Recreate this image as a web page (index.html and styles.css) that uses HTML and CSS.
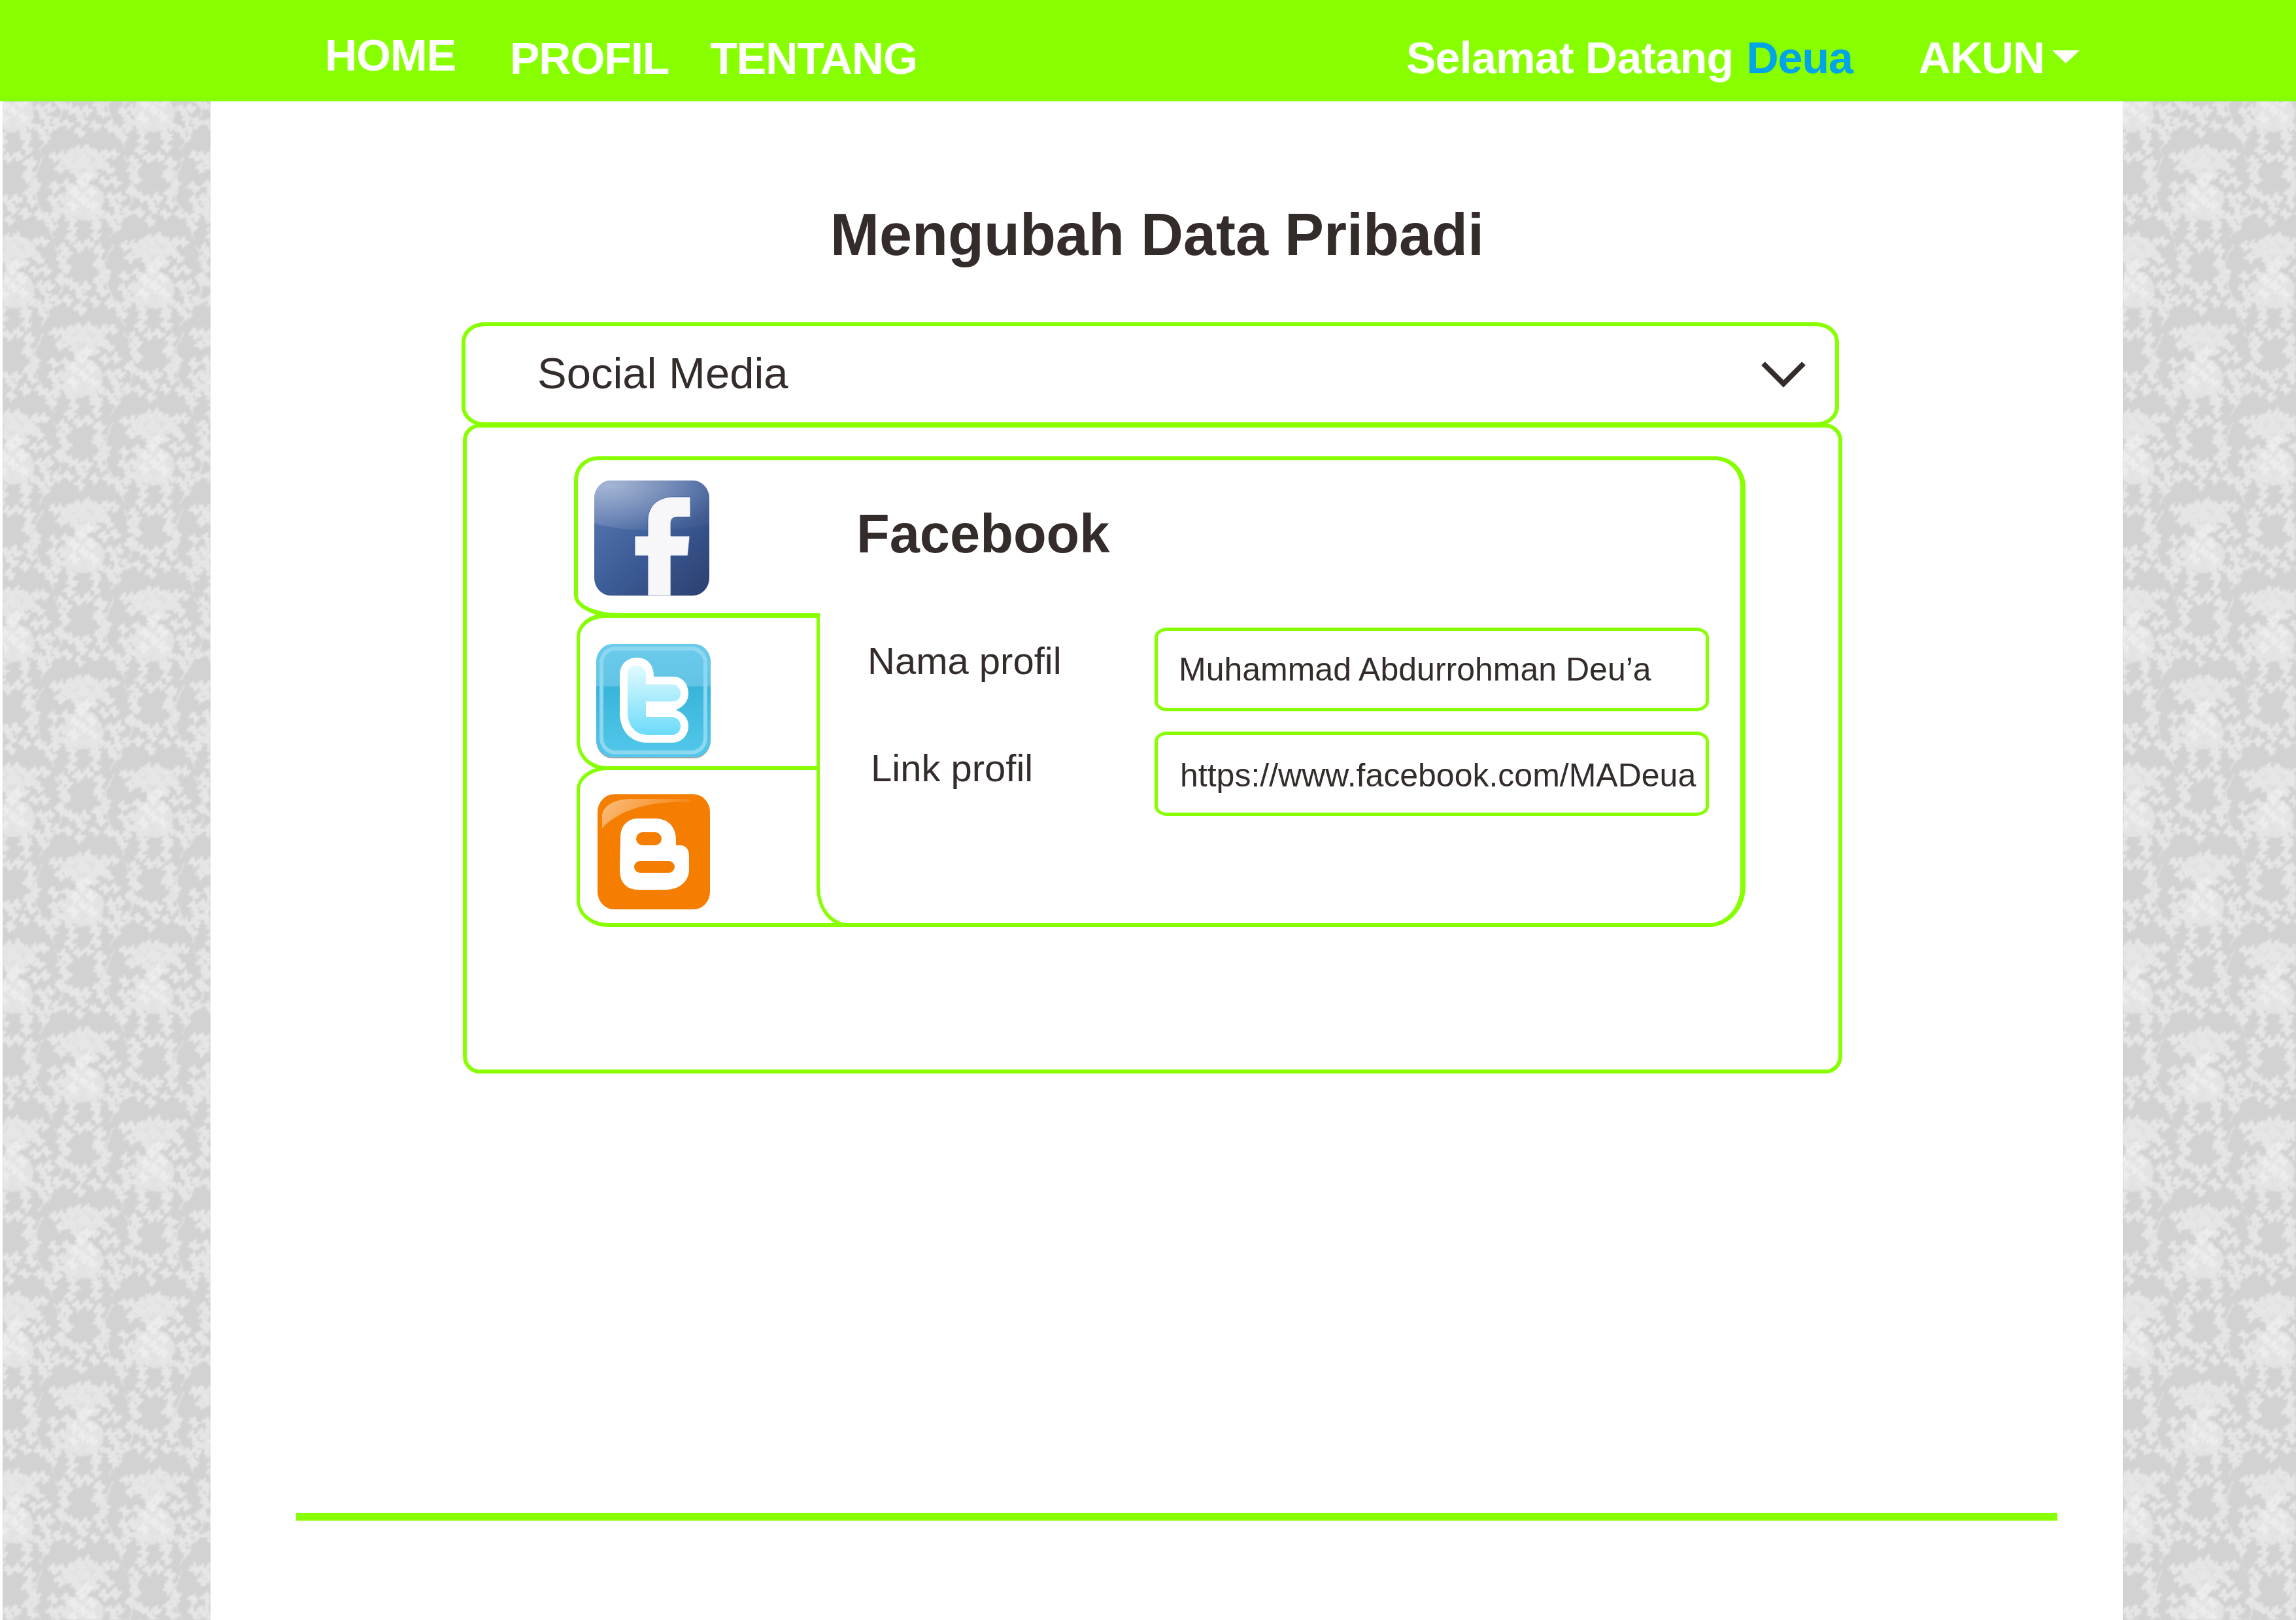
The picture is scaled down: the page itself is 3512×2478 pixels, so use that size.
FILE: index.html
```html
<!DOCTYPE html>
<html lang="id">
<head>
<meta charset="utf-8">
<title>Mengubah Data Pribadi</title>
<link rel="stylesheet" href="styles.css">
</head>
<body>
<header class="topbar">
  <nav class="nav-left">
    <a class="nav-item nav-home">HOME</a>
    <a class="nav-item nav-profil">PROFIL</a>
    <a class="nav-item nav-tentang">TENTANG</a>
  </nav>
  <div class="nav-right">
    <span class="welcome">Selamat Datang <span class="welcome-name">Deua</span></span>
    <span class="account">AKUN<svg class="account-caret" viewBox="0 0 42 20"><polygon points="0,0 42,0 21,20"/></svg></span>
  </div>
</header>
<div class="shell">
  <aside class="side side-left">
    <svg class="floral" width="100%" height="100%">
      <defs>
        <filter id="organic" x="0" y="0" width="100%" height="100%">
          <feTurbulence type="fractalNoise" baseFrequency="0.035" numOctaves="1" seed="7" result="warp"/>
          <feDisplacementMap in="SourceGraphic" in2="warp" scale="9" xChannelSelector="R" yChannelSelector="G" result="a"/>
          <feTurbulence type="fractalNoise" baseFrequency="0.18" numOctaves="2" seed="4" result="n"/>
          <feDisplacementMap in="a" in2="n" scale="5" xChannelSelector="G" yChannelSelector="R"/>
          <feGaussianBlur stdDeviation="1.05"/>
        </filter>
        <g id="p">
          <circle r="3.4"/>
          <ellipse cy="-5.6" rx="2.3" ry="4"/>
          <ellipse cy="5.6" rx="2.3" ry="4"/>
          <ellipse cx="-5.6" rx="4" ry="2.3"/>
          <ellipse cx="5.6" rx="4" ry="2.3"/>
          <ellipse cx="-4.2" cy="-4.2" rx="2.4" ry="2.4"/>
          <ellipse cx="4.2" cy="4.2" rx="2.4" ry="2.4"/>
        </g>
        <g id="q">
          <use href="#p" x="-7" y="-5"/>
          <use href="#p" x="7" y="-7"/>
          <use href="#p" x="1" y="8"/>
        </g>
        <g id="motif">
          <g fill="#e6e6e6">
            <ellipse cx="0" cy="-56" rx="34" ry="16" fill="#e0e0e0"/>
            <ellipse cx="0" cy="6" rx="31" ry="29" fill="#e3e3e3"/>
            <use href="#q" x="0" y="-66"/><use href="#q" x="-26" y="-58"/><use href="#q" x="27" y="-60"/>
            <use href="#q" x="-12" y="-46"/><use href="#q" x="15" y="-44"/><use href="#p" x="-45" y="-62"/><use href="#p" x="46" y="-67"/>
            <use href="#p" x="-36" y="-44"/><use href="#p" x="38" y="-42"/><use href="#p" x="-2" y="-30"/>
            <use href="#q" x="-40" y="9"/><use href="#q" x="48" y="6"/><use href="#q" x="-50" y="36"/><use href="#q" x="46" y="36"/>
            <use href="#p" x="-26" y="-18"/><use href="#p" x="32" y="-22"/><use href="#p" x="-46" y="-16"/><use href="#p" x="48" y="-24"/>
            <use href="#q" x="-20" y="28"/><use href="#q" x="18" y="30"/>
            <use href="#p" x="-17" y="48"/><use href="#p" x="-21" y="62"/><use href="#p" x="-8" y="75"/><use href="#p" x="7" y="72"/><use href="#p" x="19" y="59"/><use href="#p" x="18" y="45"/>
            <use href="#p" x="-31" y="78"/><use href="#p" x="-33" y="94"/><use href="#p" x="-27" y="108"/><use href="#p" x="-36" y="124"/>
            <use href="#p" x="26" y="80"/><use href="#p" x="24" y="97"/><use href="#p" x="33" y="113"/><use href="#p" x="22" y="130"/>
            <use href="#q" x="-3" y="-126"/><use href="#p" x="-24" y="-112"/><use href="#p" x="17" y="-110"/><use href="#p" x="-6" y="-100"/><use href="#p" x="-20" y="-136"/>
            <use href="#p" x="-84" y="-52"/><use href="#p" x="-86" y="-32"/><use href="#p" x="-77" y="-12"/><use href="#p" x="-80" y="8"/>
            <use href="#p" x="-68" y="26"/><use href="#p" x="82" y="-50"/><use href="#p" x="77" y="-30"/><use href="#p" x="74" y="-8"/><use href="#p" x="66" y="22"/>
          </g>
          <g fill="#ededed">
            <use href="#p" x="-14" y="-8"/><use href="#p" x="12" y="-10"/><use href="#p" x="-16" y="12"/><use href="#p" x="14" y="12"/><use href="#p" x="0" y="2"/>
            <use href="#p" x="-4" y="-24"/><use href="#p" x="6" y="-34"/>
          </g>
          <g fill="none" stroke="#e3e3e3" stroke-width="2">
            <path d="M-62 -62 C-74 -40 -80 -20 -72 2 C-66 20 -52 38 -46 62"/>
            <path d="M62 -62 C76 -40 80 -14 72 10 C66 28 52 40 40 64"/>
            <path d="M-30 74 C-34 100 -30 120 -36 134"/>
            <path d="M26 74 C24 96 34 116 24 134"/>
          </g>
        </g>
        <pattern id="lace" width="215" height="270" patternUnits="userSpaceOnUse">
          <use href="#motif" x="124" y="147"/>
          <use href="#motif" x="124" y="417"/>
          <use href="#motif" x="124" y="-123"/>
          <use href="#motif" x="17" y="12"/>
          <use href="#motif" x="232" y="12"/>
          <use href="#motif" x="17" y="282"/>
          <use href="#motif" x="232" y="282"/>
        </pattern>
        <linearGradient id="fbBase" x1="0" y1="0" x2="1" y2="1">
          <stop offset="0" stop-color="#5f7db5"/><stop offset=".5" stop-color="#3d5d99"/><stop offset="1" stop-color="#2b3f6e"/>
        </linearGradient>
        <radialGradient id="fbGloss" cx=".15" cy=".1" r="1">
          <stop offset="0" stop-color="#fff" stop-opacity=".45"/><stop offset="1" stop-color="#fff" stop-opacity=".04"/>
        </radialGradient>
        <linearGradient id="twBase" x1="0" y1="0" x2="0" y2="1">
          <stop offset="0" stop-color="#6ccbec"/><stop offset=".37" stop-color="#62c4e5"/><stop offset=".38" stop-color="#39b5da"/><stop offset="1" stop-color="#52c8eb"/>
        </linearGradient>
        <linearGradient id="twBird" x1="0" y1="0" x2="0" y2="1">
          <stop offset="0" stop-color="#e2fbff"/><stop offset="1" stop-color="#6bdbf9"/>
        </linearGradient>
        <linearGradient id="blGloss" x1="0" y1="0" x2="1" y2=".3">
          <stop offset="0" stop-color="#fff" stop-opacity=".5"/><stop offset="1" stop-color="#fff" stop-opacity=".05"/>
        </linearGradient>
      </defs>
      <rect width="100%" height="100%" fill="url(#lace)" filter="url(#organic)"/>
    </svg>
  </aside>

  <main class="center">
    <h1 class="page-title">Mengubah Data Pribadi</h1>
    <div class="select-box">
      <span class="select-label">Social Media</span>
      <svg class="chevron" viewBox="0 0 68 40"><polyline points="3,3 34,34 65,3"/></svg>
    </div>
    <section class="panel">
      <div class="social">
        <div class="tabs">
          <div class="tab tab-fb">
            <svg class="icon" viewBox="0 0 176 176">
              <rect width="176" height="176" rx="25" ry="27" fill="url(#fbBase)"/>
              <path d="M0 66 V27 C0 12 11 0 25 0 H151 C165 0 176 12 176 27 V66 C120 80 56 80 0 66 Z" fill="url(#fbGloss)"/>
              <path d="M82 176 V115 H62 V85 H82 V62 C82 38 98 25 122 25 H147 V56 H128 C120 56 117 58 117 66 V85 H146 L143 115 H117 V176 Z" fill="#f7f7f9" stroke="#3d5d99" stroke-width=".8"/>
            </svg>
          </div>
          <div class="tab tab-tw">
            <svg class="icon" viewBox="0 0 175 175">
              <rect y="2" width="175" height="173" rx="25" ry="27" fill="#9aa7ad"/>
              <rect width="175" height="173" rx="25" ry="27" fill="url(#twBase)"/>
              <rect x="8" y="7" width="159" height="159" rx="22" ry="22" fill="none" stroke="#8dd8ef" stroke-width="6"/>
              <path d="M36 48 C36 30 48 21 62 21 C78 21 88 31 88 50 H118 C132 50 141 62 141 76 C141 88 132 97 122 101 C133 105 141 114 141 125 C141 141 130 151 116 151 H78 C52 151 36 132 36 105 Z" fill="#fff"/>
              <path d="M48 46 C48 37 54 33 62 33 C70 33 76 38 76 46 V62 H116 C124 62 129 68 129 76 C129 83 124 88 116 88 H76 V112 H116 C124 112 129 118 129 126 C129 133 124 139 116 139 H78 C60 139 48 125 48 105 Z" fill="url(#twBird)"/>
            </svg>
          </div>
          <div class="tab tab-bl">
            <svg class="icon" viewBox="0 0 172 176">
              <rect width="172" height="176" rx="25" ry="27" fill="#f57d00"/>
              <path d="M7 52 V32 C9 16 28 7 52 7 H135 C142 8 142 11 146 12 C100 10 40 16 7 52 Z" fill="url(#blGloss)"/>
              <path d="M62 37 H88 C108 37 120 50 120 70 V78 H126 C135 78 140 84 140 94 V115 C140 134 124 146 104 146 H62 C44 146 34 134 34 116 L35 66 C35 48 46 37 62 37 Z" fill="#fff"/>
              <rect x="59" y="58" width="39" height="20" rx="10" fill="#f57d00"/>
              <rect x="56" y="102" width="62" height="18" rx="9" fill="#f57d00"/>
            </svg>
          </div>
        </div>
        <div class="detail">
          <h2 class="detail-title">Facebook</h2>
          <div class="fields">
            <span class="field-label">Nama profil</span>
            <div class="field-input">Muhammad Abdurrohman Deu’a</div>
            <span class="field-label field-label-link">Link profil</span>
            <div class="field-input field-input-link">https://www.facebook.com/MADeua</div>
          </div>
        </div>
      </div>
    </section>
    <div class="footer-rule"></div>
  </main>

  <aside class="side side-right">
    <svg class="floral" width="100%" height="100%">
      <rect width="100%" height="100%" fill="url(#lace)" filter="url(#organic)"/>
    </svg>
  </aside>
</div>
</body>
</html>
```

FILE: styles.css
```css
* { box-sizing: border-box; }
html, body { margin: 0; padding: 0; background: #fff; }
body {
  width: 3512px;
  height: 2478px;
  overflow: hidden;
  font-family: "Liberation Sans", Arial, sans-serif;
  color: #332c2b;
}

/* top bar */
.topbar {
  height: 155px;
  background: #88ff00;
  display: flex;
  color: #fff;
  font-weight: 700;
  font-size: 68px;
  line-height: 68px;
  padding-left: 497px;
}
.nav-left, .nav-right { display: flex; align-items: flex-start; }
.nav-item { letter-spacing: -1px; margin-top: 55px; white-space: nowrap; }
.nav-home { margin-top: 50px; margin-right: 83px; }
.nav-profil { margin-right: 63px; }
.nav-right { margin-left: 748px; margin-top: 54px; }
.welcome { letter-spacing: -0.7px; white-space: nowrap; margin-right: 101px; }
.welcome-name { color: #00a4e8; letter-spacing: -1px; margin-left: 2px; }
.account { display: flex; align-items: flex-start; letter-spacing: -1px; }
.account-caret { width: 42px; height: 20px; margin: 23px 0 0 12px; fill: #fff; }

/* page frame */
.shell {
  height: 2323px;
  display: grid;
  grid-template-columns: 322px 1fr 265px;
}
.side { background: #d2d2d2; height: 2323px; overflow: hidden; }
.side-left { margin-left: 4px; }
.floral { display: block; }

.center { padding-top: 159px; }
.page-title {
  margin: 0 29px 89px 0;
  font-size: 90px;
  line-height: 90px;
  font-weight: 700;
  text-align: center;
}

/* dropdown */
.select-box {
  width: 2107px;
  height: 159px;
  margin-left: 384px;
  border: 6px solid #88ff00;
  border-radius: 35px / 30px;
  display: flex;
  align-items: center;
  justify-content: space-between;
  padding: 0 45px 0 110px;
}
.select-label { font-size: 67px; line-height: 67px; margin-bottom: 5px; }
.chevron { width: 68px; height: 40px; fill: none; stroke: #332c2b; stroke-width: 8; }

/* social panel */
.panel {
  width: 2110px;
  height: 994px;
  margin: -4px 0 0 386px;
  border: 6px solid #88ff00;
  border-radius: 26px;
  padding: 44px 0 0 164px;
}
.social {
  width: 1792px;
  height: 720px;
  display: grid;
  grid-template-columns: 371px 1fr;
}
.tabs { display: flex; flex-direction: column; }
.tab { border: 0 solid #88ff00; }
.tab-fb {
  height: 247px;
  padding: 31px 0 0 25px;
  border-width: 6px 0 7px 6px;
  border-radius: 36px 0 0 70px / 36px 0 0 34px;
}
.tab-tw {
  height: 240px;
  margin: -7px 0 0 4px;
  padding: 40px 0 0 25px;
  border-width: 7px 0 6px 5px;
  border-radius: 45px 0 0 45px / 36px 0 0 44px;
}
.tab-bl {
  height: 246px;
  margin: -6px 0 0 4px;
  padding: 37px 0 0 27px;
  border-width: 6px 0 6px 5px;
  border-radius: 48px 0 0 48px / 36px 0 0 41px;
}
.icon { display: block; }
.tab-fb .icon { width: 176px; height: 176px; }
.tab-tw .icon { width: 175px; height: 175px; }
.tab-bl .icon { width: 172px; height: 176px; }

.detail {
  position: relative;
  border: solid #88ff00;
  border-width: 6px 8px 6px 0;
  border-radius: 0 46px 56px 0 / 0 46px 62px 0;
  padding: 71px 0 0 61px;
}
.detail::before {
  content: "";
  position: absolute;
  left: 0;
  top: 234px;
  bottom: -6px;
  width: 90px;
  border-left: 5px solid #88ff00;
  border-bottom: 6px solid #88ff00;
  border-bottom-left-radius: 48px 60px;
}
.detail-title {
  margin: 0 0 102px;
  font-size: 83px;
  line-height: 83px;
  font-weight: 700;
}
.fields {
  margin-left: 17px;
  display: grid;
  grid-template-columns: 439px 848px;
  grid-template-rows: 128px 129px;
  row-gap: 31px;
}
.field-label { font-size: 58px; line-height: 58px; margin-top: 22px; }
.field-label-link { margin: 27px 0 0 5px; }
.field-input {
  border: 5px solid #88ff00;
  border-radius: 19px / 15px;
  display: flex;
  align-items: center;
  padding-left: 32px;
  font-size: 50px;
  line-height: 50px;
  white-space: nowrap;
}
.field-input-link { padding: 5px 0 0 34px; }

.footer-rule {
  width: 2694px;
  height: 12px;
  margin: 672px 0 0 131px;
  background: #88ff00;
}
```
